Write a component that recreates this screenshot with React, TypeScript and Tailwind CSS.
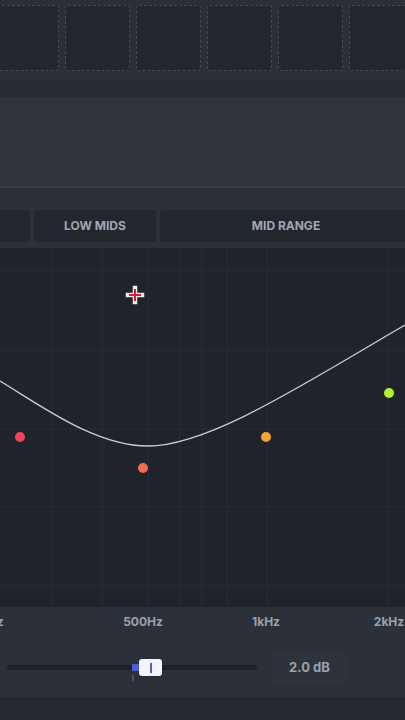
import React from "react";

const tiles = [0, 1, 2, 3, 4, 5];

const vLines = [52, 102, 148, 180, 202, 227, 267, 388];
const hLines = [22, 102, 181, 259, 337];

const bands = [
  { x: 20, y: 189, color: "#f0445a" },
  { x: 143, y: 220, color: "#f46a4e" },
  { x: 266, y: 189, color: "#f5a431" },
  { x: 389, y: 145, color: "#b2ef3a" },
];

const freqLabels = [
  { label: "250Hz", x: -16 },
  { label: "500Hz", x: 143 },
  { label: "1kHz", x: 266 },
  { label: "2kHz", x: 389 },
];

function EqGraph() {
  return (
    <svg width="405" height="359" viewBox="0 0 405 359" className="block">
      <rect width="405" height="359" fill="#1f232a" />
      {vLines.map((x) => (
        <line key={x} x1={x} y1={0} x2={x} y2={359} stroke="#292e36" strokeWidth="1" />
      ))}
      {hLines.map((y) => (
        <line key={y} x1={0} y1={y} x2={405} y2={y} stroke="#292e36" strokeWidth="1" />
      ))}
      <path
        d="M0 133 C 40 157, 95 198, 148 198 C 210 198, 310 132, 405 77"
        fill="none"
        stroke="#c9ccd2"
        strokeWidth="1.4"
      />
      {bands.map((b) => (
        <circle key={b.x} cx={b.x} cy={b.y} r="5" fill={b.color} />
      ))}
      <g transform="translate(135 47)">
        <path d="M-7 0 H7 M0 -7 V7" stroke="#f4e9ea" strokeWidth="4.5" strokeLinecap="square" />
        <path d="M-6 0 H6 M0 -6 V6" stroke="#d81e2c" strokeWidth="2" />
      </g>
    </svg>
  );
}

export default function App() {
  return (
    <div className="w-[405px] h-[720px] overflow-hidden bg-[#2c3139] font-['Inter','Liberation_Sans',sans-serif]">
      {/* pad strip */}
      <div className="h-[80px] bg-[#2b3038] pt-[5px] overflow-hidden">
        <div className="flex gap-[6px] -ml-[6px]">
          {tiles.map((t) => (
            <div
              key={t}
              className="w-[65px] h-[66px] shrink-0 rounded-[3px] border border-dashed border-[#444a55] bg-[#22272f]"
            />
          ))}
        </div>
      </div>
      <div className="h-[17px] bg-[#262a31]" />
      <div className="h-[89px] bg-[#2f343c]" />
      <div className="h-[2px] bg-[#3a3f48]" />

      {/* band tabs */}
      <div className="pt-[22px] pb-[6px] overflow-hidden">
        <div className="flex gap-[4px] -ml-[20px] h-[32px]">
          <div className="w-[50px] shrink-0 rounded-[3px] bg-[#22262d]" />
          <div className="w-[122px] shrink-0 rounded-[3px] bg-[#22262d] flex items-center justify-center text-[12px] font-bold text-[#a1a7b4]">
            LOW MIDS
          </div>
          <div className="w-[270px] shrink-0 rounded-[3px] bg-[#22262d] flex items-center justify-center text-[12px] font-bold text-[#a1a7b4] pr-[18px]">
            MID RANGE
          </div>
        </div>
      </div>

      <EqGraph />

      {/* frequency axis */}
      <div className="relative h-[28px]">
        {freqLabels.map((f) => (
          <span
            key={f.label}
            className="absolute top-[6px] -translate-x-1/2 text-[12px] font-bold text-[#9ba1ad] whitespace-nowrap"
            style={{ left: f.x }}
          >
            {f.label}
          </span>
        ))}
      </div>

      {/* gain slider */}
      <div className="h-[62px] flex items-center pl-[7px] pt-[3px]">
        <div className="relative w-[250px] h-[5px] rounded-full bg-[#1c2027]">
          <div className="absolute left-[125px] top-[-1px] w-[8px] h-[7px] bg-[#4f5bd6]" />
          <div className="absolute left-[132px] top-[-6px] w-[23px] h-[17px] rounded-[3px] bg-[#f3f4fa] flex items-center justify-center shadow-sm">
            <div className="w-[2px] h-[10px] bg-[#4f5bd6]" />
          </div>
          <div className="absolute left-[125px] top-[10px] w-[1.5px] h-[6px] bg-[#4d535e]" />
        </div>
        <div className="ml-[15px] w-[75px] h-[30px] rounded-[3px] bg-[#2e333b] flex items-center justify-center text-[13px] font-bold text-[#9ba1ad]">
          2.0 dB
        </div>
      </div>
      <div className="h-[23px] bg-[#252a31]" />
    </div>
  );
}
